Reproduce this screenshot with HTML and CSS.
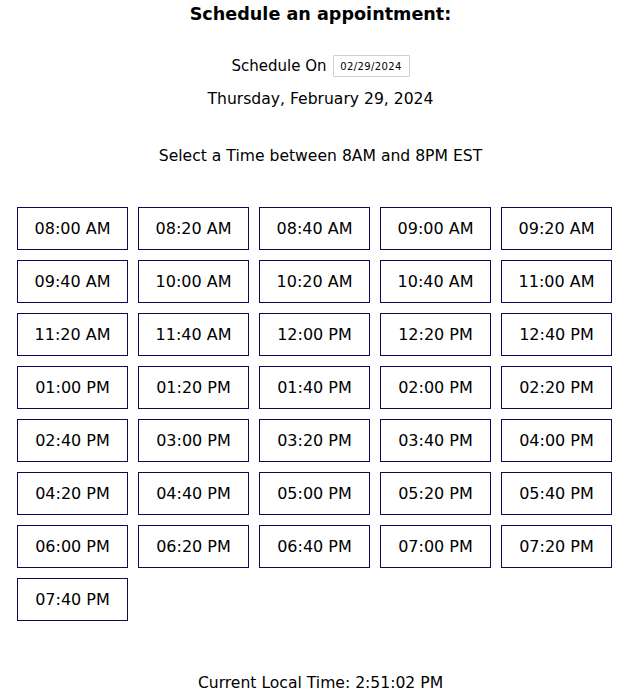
FILE: index.html
```html
<!DOCTYPE html>
<html>
<head>
<meta charset="utf-8">
<link rel="stylesheet" href="styles.css">
</head>
<body>
<h1 class="title">Schedule an appointment:</h1>
<div class="pick-row">
  <span class="pick-label">Schedule On</span>
  <input class="date-input" type="text" value="02/29/2024" readonly>
</div>
<div class="long-date">Thursday, February 29, 2024</div>
<div class="hint">Select a Time between 8AM and 8PM EST</div>
<div class="slots">
  <button class="slot">08:00 AM</button>
  <button class="slot">08:20 AM</button>
  <button class="slot">08:40 AM</button>
  <button class="slot">09:00 AM</button>
  <button class="slot">09:20 AM</button>
  <button class="slot">09:40 AM</button>
  <button class="slot">10:00 AM</button>
  <button class="slot">10:20 AM</button>
  <button class="slot">10:40 AM</button>
  <button class="slot">11:00 AM</button>
  <button class="slot">11:20 AM</button>
  <button class="slot">11:40 AM</button>
  <button class="slot">12:00 PM</button>
  <button class="slot">12:20 PM</button>
  <button class="slot">12:40 PM</button>
  <button class="slot">01:00 PM</button>
  <button class="slot">01:20 PM</button>
  <button class="slot">01:40 PM</button>
  <button class="slot">02:00 PM</button>
  <button class="slot">02:20 PM</button>
  <button class="slot">02:40 PM</button>
  <button class="slot">03:00 PM</button>
  <button class="slot">03:20 PM</button>
  <button class="slot">03:40 PM</button>
  <button class="slot">04:00 PM</button>
  <button class="slot">04:20 PM</button>
  <button class="slot">04:40 PM</button>
  <button class="slot">05:00 PM</button>
  <button class="slot">05:20 PM</button>
  <button class="slot">05:40 PM</button>
  <button class="slot">06:00 PM</button>
  <button class="slot">06:20 PM</button>
  <button class="slot">06:40 PM</button>
  <button class="slot">07:00 PM</button>
  <button class="slot">07:20 PM</button>
  <button class="slot">07:40 PM</button>
</div>
<div class="clock">Current Local Time: 2:51:02 PM</div>
</body>
</html>
```

FILE: styles.css
```css
html, body {
  margin: 0;
  padding: 0;
  background: #ffffff;
}
body {
  width: 625px;
  padding-left: 8px;
  font-family: "DejaVu Sans", Verdana, sans-serif;
  color: #000;
  font-size: 15.6px;
}
.title {
  margin: 0;
  height: 29px;
  line-height: 29px;
  font-size: 17.6px;
  font-weight: bold;
  text-align: center;
}
.pick-row {
  margin-top: 25px;
  height: 24px;
  display: flex;
  justify-content: center;
  align-items: center;
  gap: 6px;
}
.pick-label {
  line-height: 24px;
  font-size: 15px;
}
.date-input {
  width: 77px;
  height: 22px;
  box-sizing: border-box;
  border: 1px solid #d0d0d0;
  border-radius: 1px;
  padding: 0 4px;
  font-family: "DejaVu Sans", sans-serif;
  font-size: 10px;
  letter-spacing: 0.4px;
  color: #000;
  background: #fff;
  text-align: center;
}
.long-date {
  margin-top: 9px;
  height: 24px;
  line-height: 24px;
  text-align: center;
}
.hint {
  margin-top: 33px;
  height: 24px;
  line-height: 24px;
  text-align: center;
}
.slots {
  margin-top: 39px;
  padding-left: 9px;
  display: grid;
  grid-template-columns: repeat(5, 111px);
  grid-auto-rows: 43px;
  column-gap: 10px;
  row-gap: 10px;
}
.slot {
  margin: 0;
  padding: 0;
  box-sizing: border-box;
  border: 1px solid #0b0b55;
  border-radius: 0;
  background: #fff;
  font-family: "DejaVu Sans", Verdana, sans-serif;
  font-size: 16px;
  color: #000;
}
.clock {
  margin-top: 50px;
  height: 24px;
  line-height: 24px;
  text-align: center;
}
```
